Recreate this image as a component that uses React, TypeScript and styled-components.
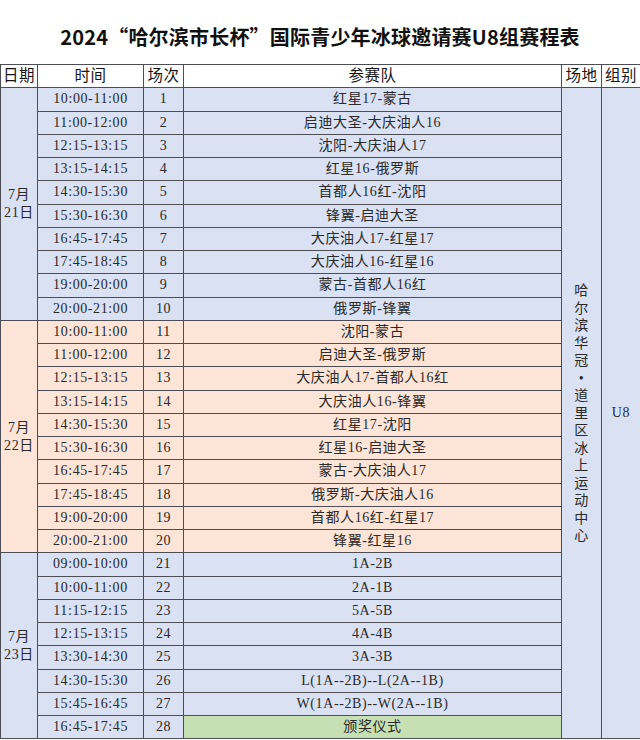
// U8 组赛程表
import styled, { createGlobalStyle } from 'styled-components'

const BLUE = '#d9e1f2'
const ORANGE = '#fce4d6'
const GREEN = '#c6e0b4'
const LINE = '#4d4d55'

type Match = { time: string; no: number; teams: string }

const days: { date: [string, string]; bg: string; matches: Match[] }[] = [
  {
    date: ['7月', '21日'],
    bg: BLUE,
    matches: [
      { time: '10:00-11:00', no: 1, teams: '红星17-蒙古' },
      { time: '11:00-12:00', no: 2, teams: '启迪大圣-大庆油人16' },
      { time: '12:15-13:15', no: 3, teams: '沈阳-大庆油人17' },
      { time: '13:15-14:15', no: 4, teams: '红星16-俄罗斯' },
      { time: '14:30-15:30', no: 5, teams: '首都人16红-沈阳' },
      { time: '15:30-16:30', no: 6, teams: '锋翼-启迪大圣' },
      { time: '16:45-17:45', no: 7, teams: '大庆油人17-红星17' },
      { time: '17:45-18:45', no: 8, teams: '大庆油人16-红星16' },
      { time: '19:00-20:00', no: 9, teams: '蒙古-首都人16红' },
      { time: '20:00-21:00', no: 10, teams: '俄罗斯-锋翼' },
    ],
  },
  {
    date: ['7月', '22日'],
    bg: ORANGE,
    matches: [
      { time: '10:00-11:00', no: 11, teams: '沈阳-蒙古' },
      { time: '11:00-12:00', no: 12, teams: '启迪大圣-俄罗斯' },
      { time: '12:15-13:15', no: 13, teams: '大庆油人17-首都人16红' },
      { time: '13:15-14:15', no: 14, teams: '大庆油人16-锋翼' },
      { time: '14:30-15:30', no: 15, teams: '红星17-沈阳' },
      { time: '15:30-16:30', no: 16, teams: '红星16-启迪大圣' },
      { time: '16:45-17:45', no: 17, teams: '蒙古-大庆油人17' },
      { time: '17:45-18:45', no: 18, teams: '俄罗斯-大庆油人16' },
      { time: '19:00-20:00', no: 19, teams: '首都人16红-红星17' },
      { time: '20:00-21:00', no: 20, teams: '锋翼-红星16' },
    ],
  },
  {
    date: ['7月', '23日'],
    bg: BLUE,
    matches: [
      { time: '09:00-10:00', no: 21, teams: '1A-2B' },
      { time: '10:00-11:00', no: 22, teams: '2A-1B' },
      { time: '11:15-12:15', no: 23, teams: '5A-5B' },
      { time: '12:15-13:15', no: 24, teams: '4A-4B' },
      { time: '13:30-14:30', no: 25, teams: '3A-3B' },
      { time: '14:30-15:30', no: 26, teams: 'L(1A--2B)--L(2A--1B)' },
      { time: '15:45-16:45', no: 27, teams: 'W(1A--2B)--W(2A--1B)' },
      { time: '16:45-17:45', no: 28, teams: '颁奖仪式' },
    ],
  },
]

const venue = '哈尔滨华冠•道里区冰上运动中心'.split('')
const totalRows = days.reduce((n, d) => n + d.matches.length, 0)

export default function App() {
  return (
    <>
      <GlobalStyle />
      <Page>
        <Title>2024“哈尔滨市长杯”国际青少年冰球邀请赛U8组赛程表</Title>
        <Table>
          <colgroup>
            <col style={{ width: 37 }} />
            <col style={{ width: 106 }} />
            <col style={{ width: 40 }} />
            <col style={{ width: 378 }} />
            <col style={{ width: 40 }} />
            <col style={{ width: 39 }} />
          </colgroup>
          <thead>
            <Row>
              <Head>日期</Head>
              <Head>时间</Head>
              <Head>场次</Head>
              <Head>参赛队</Head>
              <Head>场地</Head>
              <Head>组别</Head>
            </Row>
          </thead>
          <tbody>
            {days.map((day, di) =>
              day.matches.map((m, mi) => (
                <Row key={m.no}>
                  {mi === 0 && (
                    <Cell $bg={day.bg} rowSpan={day.matches.length}>
                      {day.date[0]}
                      <br />
                      {day.date[1]}
                    </Cell>
                  )}
                  <Cell $bg={day.bg}>{m.time}</Cell>
                  <Cell $bg={day.bg}>{m.no}</Cell>
                  <Cell $bg={m.no === 28 ? GREEN : day.bg}>{m.teams}</Cell>
                  {di === 0 && mi === 0 && (
                    <>
                      <Cell $bg={BLUE} rowSpan={totalRows}>
                        <Vertical>
                          {venue.map((c, i) => (
                            <span key={i}>{c}</span>
                          ))}
                        </Vertical>
                      </Cell>
                      <Cell $bg={BLUE} rowSpan={totalRows}>
                        U8
                      </Cell>
                    </>
                  )}
                </Row>
              ))
            )}
          </tbody>
        </Table>
      </Page>
    </>
  )
}

const GlobalStyle = createGlobalStyle`
  html, body {
    margin: 0;
    padding: 0;
    background: #ffffff;
  }
`

const Page = styled.div`
  width: 640px;
  background: #ffffff;
  font-family: 'Liberation Serif', 'Noto Sans CJK SC', serif;
`

const Title = styled.h1`
  margin: 0;
  height: 64px;
  display: flex;
  align-items: center;
  justify-content: center;
  padding-top: 8px;
  box-sizing: border-box;
  font-family: 'Noto Sans CJK SC', sans-serif;
  font-size: 20px;
  font-weight: 700;
  color: #111111;
  letter-spacing: 0.2px;
`

const Table = styled.table`
  width: 640px;
  table-layout: fixed;
  border-collapse: collapse;
  font-size: 14px;
  color: #2a2a2a;
`

const Row = styled.tr`
  height: 23.25px;
`

const Head = styled.th`
  border: 1px solid ${LINE};
  background: #ffffff;
  padding: 0;
  font-weight: 400;
  font-size: 15.5px;
  color: #151515;
  text-align: center;
  vertical-align: middle;
  line-height: 20px;
  letter-spacing: 0.5px;
`

const Cell = styled.td<{ $bg: string }>`
  border: 1px solid ${LINE};
  background: ${(p) => p.$bg};
  padding: 0;
  text-align: center;
  vertical-align: middle;
  line-height: 18px;
  white-space: nowrap;
  letter-spacing: 0.6px;
`

const Vertical = styled.div`
  display: flex;
  flex-direction: column;
  align-items: center;
  line-height: 17.5px;
`
